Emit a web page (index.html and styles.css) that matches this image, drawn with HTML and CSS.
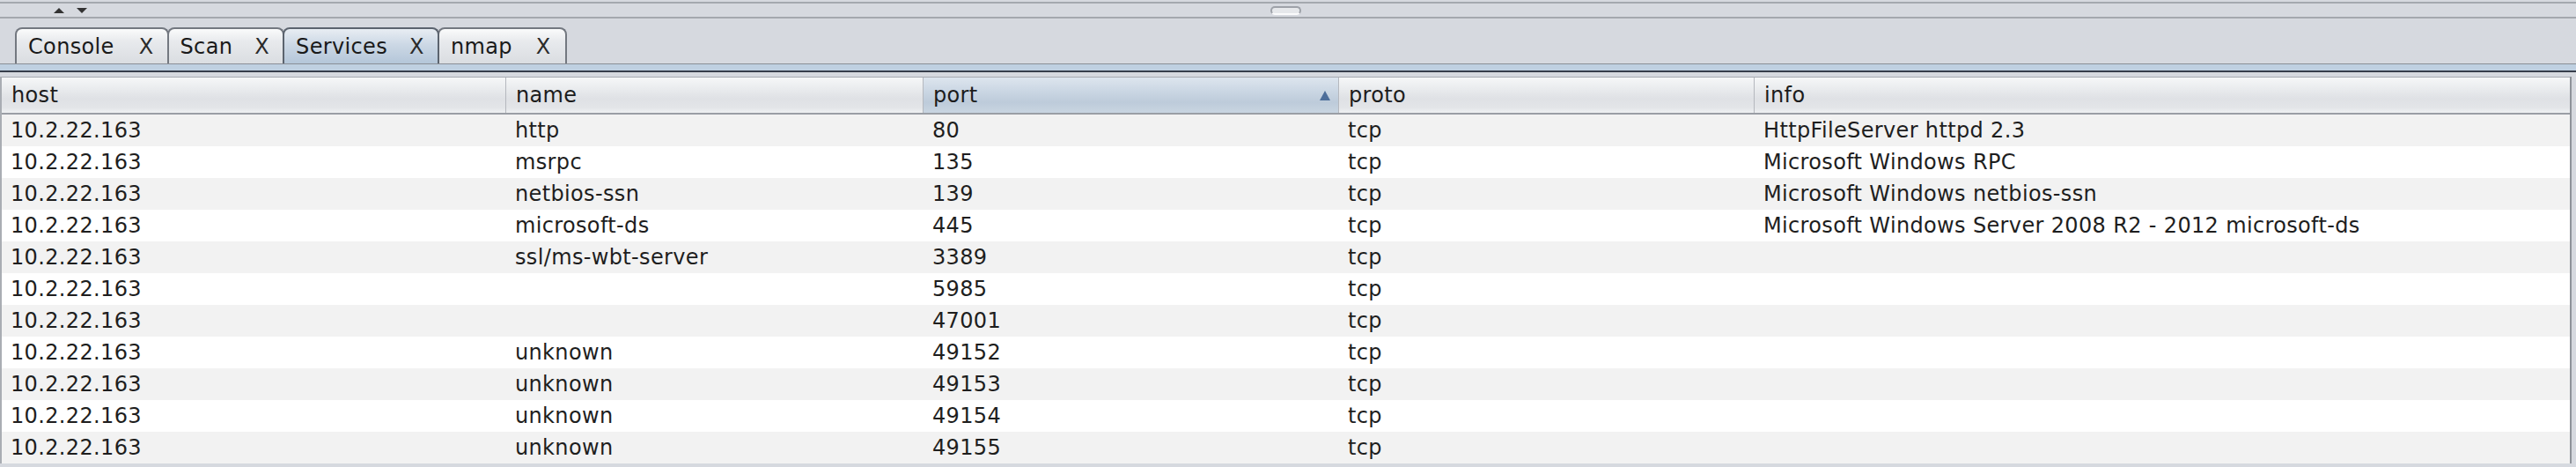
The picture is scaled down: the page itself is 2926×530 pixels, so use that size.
FILE: index.html
```html
<!DOCTYPE html>
<html>
<head>
<meta charset="utf-8">
<link rel="stylesheet" href="styles.css">
</head>
<body>
<div class="divider">
  <div class="arrows"><span class="arrow up"></span><span class="arrow down"></span></div>
  <div class="grip"></div>
  <div></div>
</div>
<div class="tabbar">
  <div class="tab"><span>Console</span><span class="x">X</span></div>
  <div class="tab"><span>Scan</span><span class="x">X</span></div>
  <div class="tab selected"><span>Services</span><span class="x">X</span></div>
  <div class="tab"><span>nmap</span><span class="x">X</span></div>
</div>
<div class="tabrule"></div>
<div class="table">
  <div class="row head">
    <div class="hc">host</div>
    <div class="hc">name</div>
    <div class="hc sorted">port<span class="sortarrow"></span></div>
    <div class="hc">proto</div>
    <div class="hc last">info</div>
  </div>
  <div class="row"><div class="c">10.2.22.163</div><div class="c">http</div><div class="c">80</div><div class="c">tcp</div><div class="c">HttpFileServer httpd 2.3</div></div>
  <div class="row"><div class="c">10.2.22.163</div><div class="c">msrpc</div><div class="c">135</div><div class="c">tcp</div><div class="c">Microsoft Windows RPC</div></div>
  <div class="row"><div class="c">10.2.22.163</div><div class="c">netbios-ssn</div><div class="c">139</div><div class="c">tcp</div><div class="c">Microsoft Windows netbios-ssn</div></div>
  <div class="row"><div class="c">10.2.22.163</div><div class="c">microsoft-ds</div><div class="c">445</div><div class="c">tcp</div><div class="c">Microsoft Windows Server 2008 R2 - 2012 microsoft-ds</div></div>
  <div class="row"><div class="c">10.2.22.163</div><div class="c">ssl/ms-wbt-server</div><div class="c">3389</div><div class="c">tcp</div><div class="c"></div></div>
  <div class="row"><div class="c">10.2.22.163</div><div class="c"></div><div class="c">5985</div><div class="c">tcp</div><div class="c"></div></div>
  <div class="row"><div class="c">10.2.22.163</div><div class="c"></div><div class="c">47001</div><div class="c">tcp</div><div class="c"></div></div>
  <div class="row"><div class="c">10.2.22.163</div><div class="c">unknown</div><div class="c">49152</div><div class="c">tcp</div><div class="c"></div></div>
  <div class="row"><div class="c">10.2.22.163</div><div class="c">unknown</div><div class="c">49153</div><div class="c">tcp</div><div class="c"></div></div>
  <div class="row"><div class="c">10.2.22.163</div><div class="c">unknown</div><div class="c">49154</div><div class="c">tcp</div><div class="c"></div></div>
  <div class="row"><div class="c">10.2.22.163</div><div class="c">unknown</div><div class="c">49155</div><div class="c">tcp</div><div class="c"></div></div>
</div>
</body>
</html>
```

FILE: styles.css
```css
html, body {
  margin: 0;
  padding: 0;
}
body {
  width: 2926px;
  height: 530px;
  overflow: hidden;
  background: #d6d9df;
  font-family: "DejaVu Sans", sans-serif;
  font-size: 24px;
  letter-spacing: 0.35px;
  color: #1e1e1e;
}

/* split pane divider */
.divider {
  display: grid;
  grid-template-columns: 1fr auto 1fr;
  align-items: center;
  height: 15px;
  margin-top: 2px;
  border-top: 2px solid #a4a8ae;
  border-bottom: 2px solid #a4a8ae;
}
.arrows {
  display: flex;
  gap: 14px;
  padding-left: 61px;
}
.arrow {
  width: 0;
  height: 0;
  border-left: 6px solid transparent;
  border-right: 6px solid transparent;
}
.up { border-bottom: 6px solid #333; }
.down { border-top: 6px solid #333; }
.grip {
  width: 31px;
  height: 6px;
  margin-left: -6px;
  border: 2px solid #9ea2a9;
  border-bottom-color: #fbfbfc;
  border-radius: 5px;
  background: #e6e8eb;
}

/* tabs */
.tabbar {
  display: flex;
  align-items: flex-end;
  height: 41px;
  padding: 10px 0 0 17px;
  border-bottom: 1px solid #8a8f97;
}
.tab {
  height: 39px;
  display: flex;
  align-items: center;
  gap: 25px;
  padding: 0 15px 0 13px;
  border: 2px solid #737880;
  border-bottom: none;
  border-radius: 8px 8px 0 0;
  background: linear-gradient(#fafbfb, #e8eaed 35%, #dadde1);
  color: #1a1a1a;
}
.tab:first-child { gap: 28px; }
.tab:last-child { gap: 27px; padding-right: 16px; }
.tab + .tab { margin-left: -2px; }
.tab.selected {
  position: relative;
  z-index: 1;
  border-color: #5b636e;
  background: linear-gradient(#e8edf3, #ccd8e5 45%, #b4c6d9);
}
.x { color: #2a2a2a; }
.tabrule {
  height: 7px;
  background: #bfd0e1;
  border-bottom: 2px solid #373e4b;
}

/* table */
.table {
  margin: 5px 5px 0 0;
  border-left: 2px solid #a9adb3;
  border-right: 2px solid #8f939a;
}
.row {
  display: grid;
  grid-template-columns: 573px 474px 472px 472px 1fr;
  height: 36px;
  align-items: center;
  background: #ffffff;
}
.row:nth-child(even) { background: #f2f2f2; }
.row.head {
  height: 40px;
  align-items: stretch;
  border-top: 1px solid #a7abb2;
  border-bottom: 2px solid #9a9ea5;
  background: linear-gradient(#f6f7f8, #eceef0 25%, #dfe1e5 60%, #e3e5e8 85%, #eef0f2);
}
.hc {
  display: flex;
  align-items: center;
  justify-content: space-between;
  padding: 0 9px 0 11px;
  border-right: 1px solid #b5b8be;
  color: #1c1c1c;
}
.hc.last { border-right: none; }
.hc.sorted {
  background: linear-gradient(#dde5ee, #cad6e3 40%, #bdcbda 70%, #c9d5e1);
}
.sortarrow {
  width: 0;
  height: 0;
  border-left: 6px solid transparent;
  border-right: 6px solid transparent;
  border-bottom: 11px solid #4d6e9a;
}
.c {
  padding-left: 10px;
  white-space: nowrap;
}
```
